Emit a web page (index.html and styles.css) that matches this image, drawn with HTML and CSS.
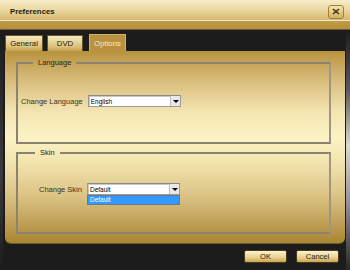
FILE: index.html
```html
<!DOCTYPE html>
<html>
<head>
<meta charset="utf-8">
<link rel="stylesheet" href="styles.css">
</head>
<body>
<div class="win">
  <div class="titlebar">
    <span class="title">Preferences</span>
    <span class="close"><svg width="8" height="7" viewBox="0 0 8 7"><path d="M1 1 L7 6 M7 1 L1 6" stroke="#3a2e10" stroke-width="1.5"/></svg></span>
  </div>
  <div class="band"></div>
  <div class="body">
    <div class="tabs">
      <div class="tab">General</div>
      <div class="tab">DVD</div>
      <div class="tab active">Options</div>
    </div>
    <div class="panel">
      <fieldset class="group">
        <legend class="legend">Language</legend>
        <div class="row lang">
          <span class="label">Change Language</span>
          <div class="select"><span class="val">English</span><span class="arrow"></span></div>
        </div>
      </fieldset>
      <fieldset class="group">
        <legend class="legend skinleg">Skin</legend>
        <div class="row skin">
          <span class="label">Change Skin</span>
          <div class="combo">
            <div class="select"><span class="val">Default</span><span class="arrow"></span></div>
            <div class="list">Default</div>
          </div>
        </div>
      </fieldset>
    </div>
    <div class="buttons">
      <div class="btn">OK</div>
      <div class="btn">Cancel</div>
    </div>
  </div>
</div>
</body>
</html>
```
FILE: styles.css
```css
* { box-sizing: border-box; }
html, body { margin: 0; padding: 0; }
body { width: 350px; height: 270px; overflow: hidden; font-family: "Liberation Sans", Arial, sans-serif; }
.win { width: 350px; height: 270px; background: #1c1c1c; display: flex; flex-direction: column; }
.titlebar {
  height: 21px; display: flex; align-items: center; justify-content: space-between;
  padding: 0 6px 0 10px;
  background: linear-gradient(to bottom, #f6ecc6 0%, #ecdaa6 45%, #d6b870 100%);
  border-bottom: 1px solid #f3e6bf;
}
.title { font-weight: bold; font-size: 7.8px; color: #1e1a10; margin-top: 2px; }
.close {
  width: 16px; height: 14px; margin-top: 3px; border: 1px solid #a08040; border-radius: 3px;
  background: linear-gradient(to bottom, #f4e4a8, #d6b060);
  display: flex; align-items: center; justify-content: center;
}
.band { height: 9px; background: linear-gradient(to bottom, #c09c4a, #b38f3c); border-bottom: 1px solid #6e5a2a; }
.body {
  flex: 1; display: flex; flex-direction: column; padding: 0 5px 0 5px;
  background:
    linear-gradient(to bottom, #1c1c1c 0%, #5a5a5a 25%, #d8d8d8 48%, #9a9a9a 70%, #262626 100%) right / 4px 100% no-repeat,
    linear-gradient(to bottom, #1c1c1c 0%, #3c3c3c 60%, #1c1c1c 100%) left / 3px 100% no-repeat,
    #1c1c1c;
}
.tabs { display: flex; gap: 4px; margin-top: 4px; height: 17px; align-items: flex-end; }
.tab {
  height: 16px; font-size: 7.8px; color: #2a2414; display: flex; align-items: center; justify-content: center;
  border: 1px solid #6a5422; border-bottom: none;
  background: linear-gradient(to bottom, #f6eac0, #dcc27a 70%, #c4a352);
}
.tab:nth-child(1) { width: 38px; }
.tab:nth-child(2) { width: 36px; }
.tab.active {
  margin-left: 2px; width: 37px; height: 17px; color: #f2e8cc;
  background: #b8923e; border: 1px solid #d4b062; border-bottom: none;
}
.panel {
  height: 193px; border-radius: 0 0 6px 6px; padding: 6px 14px 0 11px;
  background: linear-gradient(to bottom, #b8923e 0%, #d2b470 12%, #f4e6b2 32%, #fbf2c4 45%, #f2e4ae 58%, #dcc486 75%, #c3a35c 88%, #a98632 100%);
  border-bottom: 1px solid #6e5a2a;
  display: flex; flex-direction: column; gap: 3px;
}
.group {
  margin: 0; padding: 0; min-width: 0; height: 87px; border: 2px solid #8a8370;
  border-right-color: #9e9680;
}
.legend { margin-left: 15px; padding: 0 5px; font-size: 7.5px; color: #2a2418; line-height: 12px; }
.skinleg { margin-left: 17px; }
.row { display: flex; align-items: center; font-size: 7.5px; color: #3a3222; }
.row.lang { margin-top: 26px; padding-left: 3px; gap: 5px; }
.row.skin { margin-top: 24px; padding-left: 21px; gap: 5px; }
.combo { position: relative; }
.select {
  width: 93px; height: 12px; background: #fff; border: 1px solid #9a9a9a;
  border-top-color: #8a8a8a; display: flex; justify-content: space-between; align-items: center;
  box-shadow: inset 1px 1px 0 #c8c8c8;
}
.val { font-size: 6.5px; color: #000; padding-left: 2px; }
.arrow {
  width: 10px; height: 10px; background: #e8e8e8; border-left: 1px solid #c0c0c0; position: relative;
}
.arrow::after {
  content: ""; position: absolute; left: 2px; top: 4px;
  border-left: 3px solid transparent; border-right: 3px solid transparent; border-top: 3px solid #000;
}
.list {
  position: absolute; left: 0; top: 12px; width: 93px; height: 10px; background: #3399ff;
  border: 1px solid #6a7a8a; color: #fff; font-size: 6.5px; padding-left: 2px; line-height: 8px;
}
.buttons { display: flex; justify-content: flex-end; gap: 9px; margin-top: 6px; padding-right: 6px; }
.btn {
  width: 43px; height: 13px; font-size: 7.5px; color: #1e1a10; display: flex; align-items: center; justify-content: center;
  border: 1px solid #4a3c18; border-radius: 2px;
  background: linear-gradient(to bottom, #fbf2cf, #e8d08a 60%, #caa550);
}
```
